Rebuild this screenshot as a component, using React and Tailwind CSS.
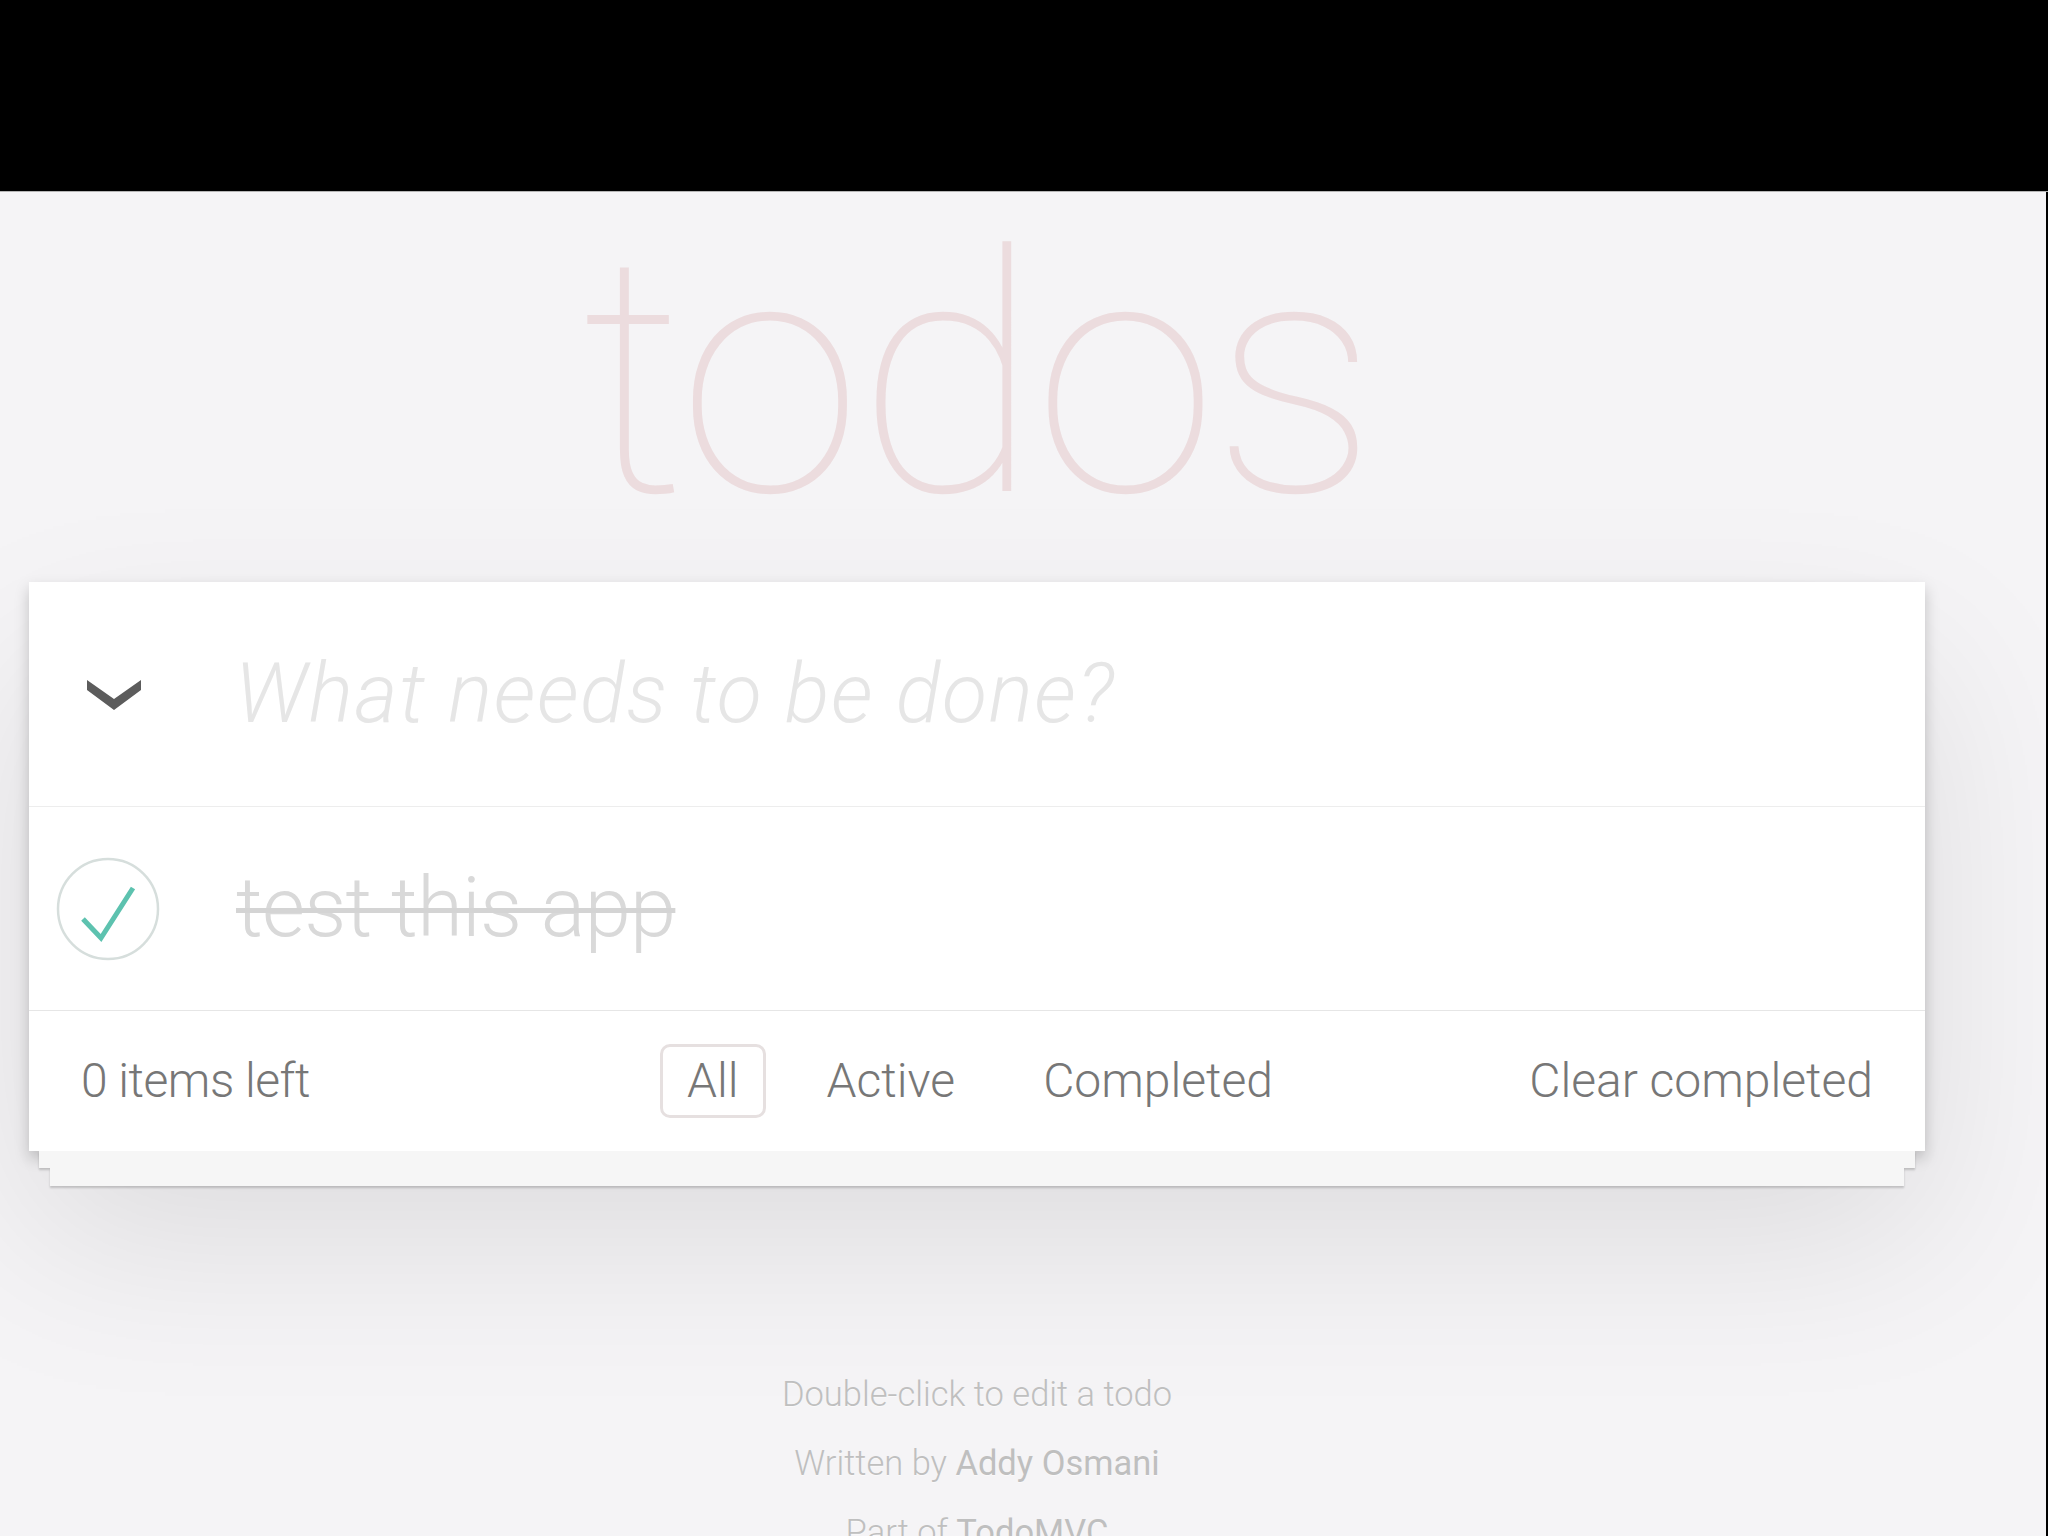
import React, { useState } from 'react';

const App = () => {
  const [text, setText] = useState('');
  const filters = ['All', 'Active', 'Completed'];

  return (
    <div className="flex h-[1536px] w-full flex-col overflow-hidden bg-black font-['Roboto','Liberation_Sans',sans-serif]">
      <div className="h-[192px] shrink-0 border-b border-[#b5b5b5]" />
      <main className="mr-[2px] flex-1 bg-[#f5f4f6]">
        <div className="ml-[29px] w-[1896px]">
          <h1 className="mt-[19px] h-[331px] text-center text-[333px] font-thin leading-none tracking-[-5px] text-[rgba(175,47,47,0.12)]">
            todos
          </h1>

          <section className="mt-[40px] bg-white shadow-[0_7px_14px_rgba(0,0,0,0.2),0_86px_172px_rgba(0,0,0,0.1)]">
            <div className="flex h-[224px] items-center">
              <svg className="ml-[58px] h-[32px] w-[54px] shrink-0" viewBox="0 0 54 32">
                <polygon points="0,2 27,21 54,2 54,12 27,32 0,12" fill="#5c5c5c" />
              </svg>
              <input
                value={text}
                onChange={(e) => setText(e.target.value)}
                placeholder="What needs to be done?"
                className="ml-[94px] flex-1 bg-transparent text-[83px] font-light tracking-[1.5px] text-[#4d4d4d] outline-none placeholder:italic placeholder:text-[#e6e6e6]"
              />
            </div>

            <div className="flex h-[204px] items-center border-t border-[#ededed]">
              <svg className="ml-[27px] h-[104px] w-[104px] shrink-0" viewBox="0 0 104 104">
                <circle cx="52" cy="52" r="50" fill="none" stroke="#d6dedc" strokeWidth="2.5" />
                <path d="M27 62 L45 81 L77 31" fill="none" stroke="#5dc2af" strokeWidth="5" />
              </svg>
              <span className="ml-[76px] text-[83px] font-light tracking-[-0.7px] text-[#d9d9d9] line-through decoration-[#d4d4d4] decoration-[5px]">
                test this app
              </span>
            </div>

            <div className="flex h-[141px] items-center justify-between border-t border-[#e6e6e6] px-[52px] text-[48px] font-light text-[#777]">
              <span className="w-[360px] tracking-[-0.5px]">0 items left</span>
              <ul className="ml-[6px] flex items-center gap-[34px]">
                {filters.map((f, i) => (
                  <li key={f}>
                    <a
                      className={`block rounded-[10px] border-[3px] px-[24px] py-[4px] leading-tight ${
                        i === 0 ? 'border-[#e6e0e0]' : 'border-transparent'
                      }`}
                    >
                      {f}
                    </a>
                  </li>
                ))}
              </ul>
              <span className="w-[360px] text-right">Clear completed</span>
            </div>
          </section>
          <div className="mx-[10px] h-[17px] bg-[#f6f6f6] shadow-[0_2px_2px_rgba(0,0,0,0.18)]" />
          <div className="mx-[21px] h-[18px] bg-[#f6f6f6] shadow-[0_2px_2px_rgba(0,0,0,0.18)]" />

          <footer className="mt-[191px] flex flex-col gap-[34.5px] text-center text-[34.5px] font-light leading-none text-[#bfbfbf] [text-shadow:0_1px_0_rgba(255,255,255,0.5)]">
            <p>Double-click to edit a todo</p>
            <p>
              Written by <a className="font-normal">Addy Osmani</a>
            </p>
            <p>
              Part of <a className="font-normal">TodoMVC</a>
            </p>
          </footer>
        </div>
      </main>
    </div>
  );
};

export default App;
